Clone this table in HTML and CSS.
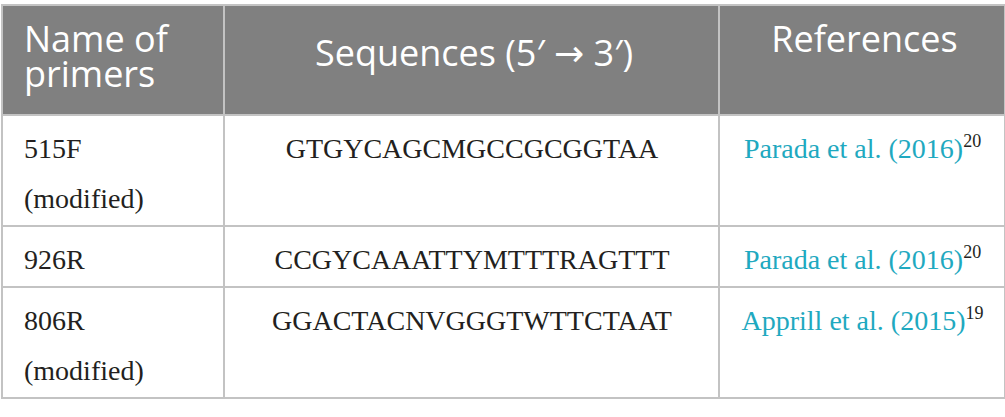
FILE: index.html
```html
<!DOCTYPE html>
<html>
<head>
<meta charset="utf-8">
<link rel="stylesheet" href="styles.css">
</head>
<body>
<table class="primers">
  <colgroup>
    <col class="c-name">
    <col class="c-seq">
    <col class="c-ref">
  </colgroup>
  <thead>
    <tr>
      <th class="h-name">Name of primers</th>
      <th class="h-seq">Sequences (5′ → 3′)</th>
      <th class="h-ref">References</th>
    </tr>
  </thead>
  <tbody>
    <tr>
      <td class="name">515F<br>(modified)</td>
      <td class="seq">GTGYCAGCMGCCGCGGTAA</td>
      <td class="ref"><a>Parada et al. (2016)</a><sup>20</sup></td>
    </tr>
    <tr>
      <td class="name">926R</td>
      <td class="seq">CCGYCAAATTYMTTTRAGTTT</td>
      <td class="ref"><a>Parada et al. (2016)</a><sup>20</sup></td>
    </tr>
    <tr>
      <td class="name">806R<br>(modified)</td>
      <td class="seq">GGACTACNVGGGTWTTCTAAT</td>
      <td class="ref"><a>Apprill et al. (2015)</a><sup>19</sup></td>
    </tr>
  </tbody>
</table>
</body>
</html>
```

FILE: styles.css
```css
html, body {
  margin: 0;
  padding: 0;
  background: #ffffff;
}

.primers {
  margin: 4px 0 0 1px;
  width: 1003px;
  border-collapse: collapse;
  table-layout: fixed;
}

.c-name { width: 222px; }
.c-seq { width: 495px; }
.c-ref { width: 286px; }

.primers th,
.primers td {
  border: 2px solid #c3c3c3;
}

.primers th {
  background: #808080;
  color: #ffffff;
  font-family: "Open Sans", "DejaVu Sans", sans-serif;
  font-weight: 400;
  font-size: 36px;
  line-height: 35px;
  height: 110px;
  box-sizing: border-box;
  padding: 15px 16px 20px 21px;
  vertical-align: top;
  text-align: center;
}

.primers th.h-name {
  text-align: left;
  padding-right: 24px;
}

.primers th.h-seq {
  padding-top: 29px;
}

.primers td {
  font-family: "Liberation Serif", "Times New Roman", serif;
  font-size: 28px;
  line-height: 50px;
  color: #231f20;
  padding: 8px 20px 1px 21px;
  vertical-align: top;
}

.primers td.seq,
.primers td.ref {
  text-align: center;
}

.primers td.ref a {
  color: #1fa9c0;
  text-decoration: none;
}

.primers td.ref sup {
  font-size: 18px;
  line-height: 0;
  vertical-align: 11px;
  color: #231f20;
}
```
